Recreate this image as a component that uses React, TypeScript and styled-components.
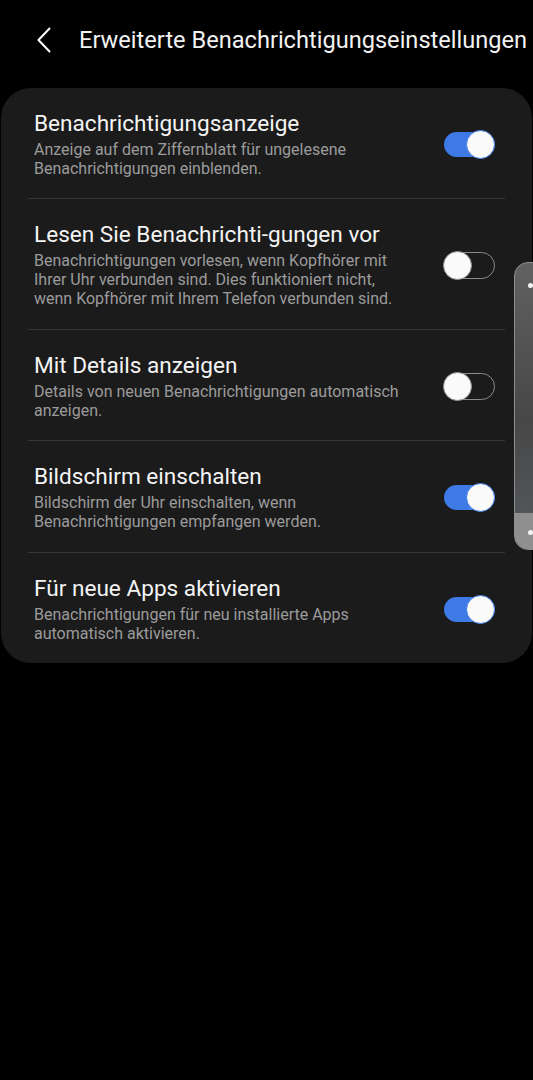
import React, { useState } from 'react'
import styled, { createGlobalStyle } from 'styled-components'

const GlobalStyle = createGlobalStyle`
  html, body {
    margin: 0;
    padding: 0;
    background: #000;
  }
  body {
    font-family: Roboto, 'Noto Sans', 'Liberation Sans', sans-serif;
    -webkit-font-smoothing: antialiased;
  }
`

const Screen = styled.div`
  position: relative;
  width: 533px;
  min-height: 1080px;
  background: #000;
  overflow: hidden;
`

const Header = styled.header`
  display: flex;
  align-items: center;
  height: 80px;
  padding-left: 33px;
  box-sizing: border-box;
`

const BackButton = styled.button`
  display: flex;
  align-items: center;
  justify-content: center;
  width: 22px;
  height: 30px;
  padding: 0;
  margin-right: 24px;
  background: none;
  border: none;
  color: #fff;
`

const Title = styled.h1`
  margin: 0;
  font-size: 23.6px;
  font-weight: 400;
  color: #f2f2f2;
  white-space: nowrap;
  letter-spacing: 0;
`

const Card = styled.section`
  margin: 8px 1px 0 1px;
  padding: 0 27px;
  background: #1b1b1b;
  border-radius: 30px;
`

const Row = styled.div<{ $last?: boolean }>`
  display: flex;
  align-items: center;
  padding: 23px 10px 20.4px 6px;
  border-bottom: ${p => (p.$last ? 'none' : '1px solid #363636')};
`

const Texts = styled.div`
  flex: 1;
  min-width: 0;
  padding-right: 30px;
`

const RowTitle = styled.div`
  font-size: 22.6px;
  line-height: 26px;
  color: #f4f4f4;
  margin-bottom: 3px;
`

const RowSub = styled.div`
  font-size: 16px;
  line-height: 19px;
  color: #9b9b9b;
`

const Track = styled.button<{ $on: boolean }>`
  position: relative;
  flex: none;
  width: 51px;
  height: ${p => (p.$on ? '25px' : '27px')};
  padding: 0;
  border-radius: 14px;
  cursor: pointer;
  box-sizing: border-box;
  background: ${p => (p.$on ? '#3e7ae6' : 'transparent')};
  border: ${p => (p.$on ? 'none' : '1.5px solid #8c8c8c')};
`

const Thumb = styled.span<{ $on: boolean }>`
  position: absolute;
  top: 50%;
  width: 29px;
  height: 29px;
  margin-top: -14.5px;
  border-radius: 50%;
  box-sizing: border-box;
  background: #fafafa;
  border: 1.5px solid ${p => (p.$on ? '#3e7ae6' : '#8c8c8c')};
  left: ${p => (p.$on ? '22px' : '-2px')};
`

const EdgeHandle = styled.div`
  position: absolute;
  left: 514px;
  top: 262px;
  width: 40px;
  height: 288px;
  box-sizing: border-box;
  border: 1px solid #8e8e8e;
  border-radius: 14px;
  overflow: hidden;
  display: flex;
  flex-direction: column;
  background: linear-gradient(180deg, #616161 0%, #474747 55%, #565a5f 100%);
`

const EdgeTop = styled.div`
  flex: 1;
  position: relative;
`

const EdgeBottom = styled.div`
  position: relative;
  height: 36px;
  background: #8f8f8f;
`

const Dot = styled.span<{ $top: number }>`
  position: absolute;
  left: 13px;
  top: ${p => p.$top}px;
  width: 5px;
  height: 5px;
  border-radius: 50%;
  background: #f4f4f4;
`

interface Item {
  title: string
  sub: string
  on: boolean
}

const items: Item[] = [
  {
    title: 'Benachrichtigungsanzeige',
    sub: 'Anzeige auf dem Ziffernblatt für ungelesene Benachrichtigungen einblenden.',
    on: true,
  },
  {
    title: 'Lesen Sie Benachrichti-gungen vor',
    sub: 'Benachrichtigungen vorlesen, wenn Kopfhörer mit Ihrer Uhr verbunden sind. Dies funktioniert nicht, wenn Kopfhörer mit Ihrem Telefon verbunden sind.',
    on: false,
  },
  {
    title: 'Mit Details anzeigen',
    sub: 'Details von neuen Benachrichtigungen automatisch anzeigen.',
    on: false,
  },
  {
    title: 'Bildschirm einschalten',
    sub: 'Bildschirm der Uhr einschalten, wenn Benachrichtigungen empfangen werden.',
    on: true,
  },
  {
    title: 'Für neue Apps aktivieren',
    sub: 'Benachrichtigungen für neu installierte Apps automatisch aktivieren.',
    on: true,
  },
]

const Toggle = ({ on, onClick }: { on: boolean; onClick: () => void }) => (
  <Track $on={on} onClick={onClick} aria-pressed={on}>
    <Thumb $on={on} />
  </Track>
)

const App = () => {
  const [state, setState] = useState(items.map(i => i.on))

  const flip = (idx: number) =>
    setState(s => s.map((v, i) => (i === idx ? !v : v)))

  return (
    <Screen>
      <GlobalStyle />
      <Header>
        <BackButton aria-label='Zurück'>
          <svg width='16' height='26' viewBox='0 0 16 26' fill='none'>
            <path d='M13.5 1.5 L2.5 13 L13.5 24.5' stroke='#fff' strokeWidth='2' strokeLinecap='round' strokeLinejoin='round' />
          </svg>
        </BackButton>
        <Title>Erweiterte Benachrichtigungseinstellungen</Title>
      </Header>

      <Card>
        {items.map((item, i) => (
          <Row key={item.title} $last={i === items.length - 1}>
            <Texts>
              <RowTitle>{item.title}</RowTitle>
              <RowSub>{item.sub}</RowSub>
            </Texts>
            <Toggle on={state[i]} onClick={() => flip(i)} />
          </Row>
        ))}
      </Card>

      <EdgeHandle>
        <EdgeTop>
          <Dot $top={20} />
        </EdgeTop>
        <EdgeBottom>
          <Dot $top={17} />
        </EdgeBottom>
      </EdgeHandle>
    </Screen>
  )
}

export default App
